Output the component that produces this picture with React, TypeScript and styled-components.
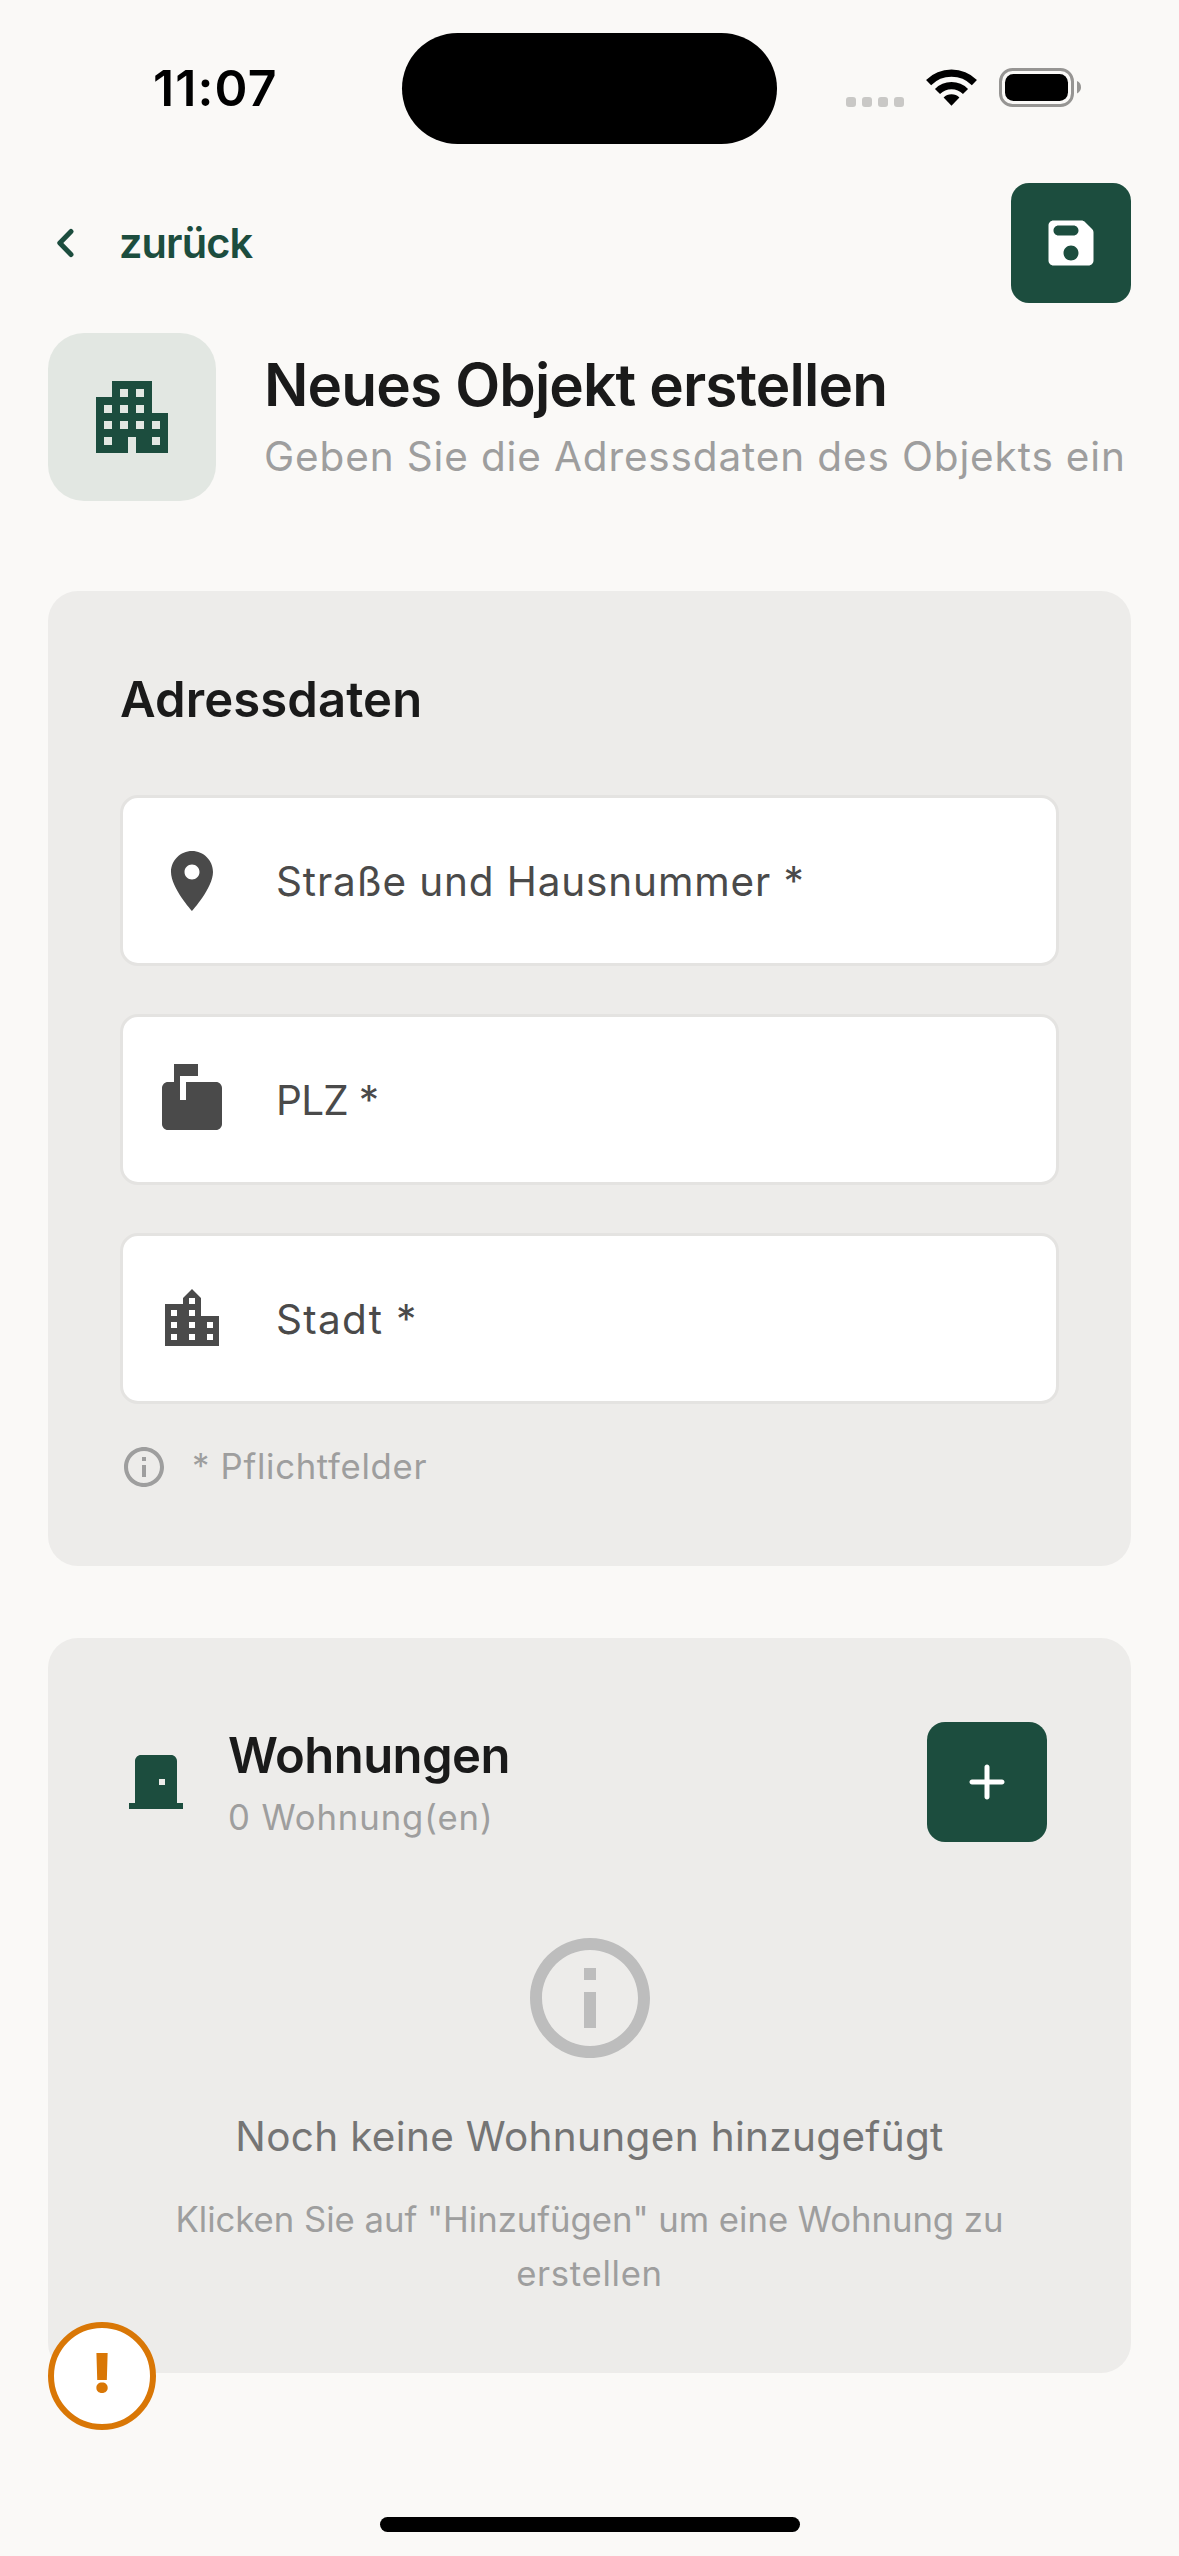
import React from 'react';
import styled, { createGlobalStyle } from 'styled-components';

const color = {
  page: '#faf9f7',
  card: '#edecea',
  green: '#1c4d3e',
  tint: '#e2e7e2',
  ink: '#1a1a1a',
  field: '#4a4a4a',
  fieldBorder: '#e4e3e1',
  muted: '#9e9e9e',
  body: '#757575',
  faint: '#bdbdbd',
  warning: '#d97706',
};

const GlobalStyle = createGlobalStyle`
  * { box-sizing: border-box; }
  body { margin: 0; background: ${color.page}; font-family: Inter, "Liberation Sans", sans-serif; font-weight: 400; }
  h1, h2, p { margin: 0; }
  button { border: 0; padding: 0; font: inherit; }
  svg { display: block; flex: none; }
`;

const Screen = styled.div`
  position: relative;
  width: 1179px;
  height: 2556px;
  background: ${color.page};
  overflow: hidden;
`;

const StatusBar = styled.div`
  display: grid;
  grid-template-columns: 402px 375px 1fr;
  align-items: center;
  height: 177px;
`;

const Clock = styled.div`
  padding: 0 0 2px 153px;
  font-size: 50px;
  font-weight: 600;
  letter-spacing: 1.1px;
  line-height: 60px;
  color: #000;
`;

const Island = styled.div`
  height: 111px;
  border-radius: 56px;
  background: #000;
`;

const StatusIcons = styled.div`
  display: flex;
  align-items: center;
  padding-left: 69px;
`;

const SignalDots = styled.div`
  display: flex;
  gap: 6px;
  margin: 26px 22px 0 0;
`;

const Dot = styled.span`
  width: 10px;
  height: 10px;
  border-radius: 3px;
  background: #c9c8c6;
`;

const WifiSlot = styled.div`
  margin: 0 22px 2px 0;
`;

const BatterySlot = styled.div`
  margin-bottom: 2px;
`;

const Content = styled.main`
  display: flex;
  flex-direction: column;
  padding: 6px 48px 0;
`;

const TopBar = styled.div`
  display: flex;
  justify-content: space-between;
  align-items: center;
  height: 120px;
`;

const BackButton = styled.button`
  display: flex;
  align-items: center;
  gap: 41px;
  padding-left: 6px;
  background: none;
  color: ${color.green};
`;

const BackLabel = styled.span`
  font-size: 41.5px;
  font-weight: 600;
  letter-spacing: -0.9px;
  line-height: 60px;
`;

const SquareButton = styled.button`
  display: flex;
  align-items: center;
  justify-content: center;
  width: 120px;
  height: 120px;
  border-radius: 18px;
  background: ${color.green};
  color: #fff;
`;

const Hero = styled.header`
  display: flex;
  align-items: center;
  gap: 48px;
  margin-top: 30px;
`;

const HeroIcon = styled.div`
  display: flex;
  align-items: center;
  justify-content: center;
  flex: none;
  width: 168px;
  height: 168px;
  border-radius: 36px;
  background: ${color.tint};
  color: ${color.green};
`;

const HeroTitle = styled.h1`
  margin-bottom: 1px;
  font-size: 58.5px;
  font-weight: 600;
  letter-spacing: -0.86px;
  line-height: 78px;
  white-space: nowrap;
  color: ${color.ink};
`;

const HeroText = styled.p`
  font-size: 40.5px;
  letter-spacing: 0.86px;
  line-height: 63px;
  white-space: nowrap;
  color: ${color.muted};
`;

const Card = styled.section<{ $top: number; $height: number }>`
  display: flex;
  flex-direction: column;
  height: ${p => p.$height}px;
  margin-top: ${p => p.$top}px;
  padding: 72px;
  border-radius: 30px;
  background: ${color.card};
`;

const CardTitle = styled.h2<{ $line: number; $spacing: number }>`
  font-size: 49px;
  font-weight: 600;
  letter-spacing: ${p => p.$spacing}px;
  line-height: ${p => p.$line}px;
  color: ${color.ink};
`;

const Fields = styled.div`
  display: flex;
  flex-direction: column;
  gap: 48px;
  margin-top: 58px;
`;

const Field = styled.div`
  display: flex;
  align-items: center;
  gap: 48px;
  height: 171px;
  padding-left: 33px;
  border: 3px solid ${color.fieldBorder};
  border-radius: 18px;
  background: #fff;
  color: ${color.field};
`;

const FieldLabel = styled.span<{ $spacing: number }>`
  padding-top: 2px;
  font-size: 40.5px;
  letter-spacing: ${p => p.$spacing}px;
  line-height: 60px;
`;

const Note = styled.div`
  display: flex;
  align-items: center;
  gap: 24px;
  height: 48px;
  margin-top: 39px;
  color: ${color.muted};
`;

const SmallText = styled.span<{ $spacing: number }>`
  font-size: 34.7px;
  letter-spacing: ${p => p.$spacing}px;
  line-height: 54px;
  white-space: nowrap;
  color: ${color.muted};
`;

const NoteText = styled(SmallText)`
  padding-bottom: 2px;
`;

const UnitsHeader = styled.div`
  display: flex;
  align-items: center;
  height: 144px;
  padding-right: 12px;
  color: ${color.green};
`;

const UnitsHeading = styled.div`
  display: flex;
  flex: 1;
  flex-direction: column;
  padding: 2px 0 0 36px;
`;

const EmptyState = styled.div`
  display: flex;
  flex-direction: column;
  align-items: center;
  padding-top: 72px;
  color: ${color.faint};
`;

const EmptyTitle = styled.p`
  margin: 35px 0 24px;
  font-size: 40.5px;
  letter-spacing: 0.32px;
  line-height: 63px;
  white-space: nowrap;
  color: ${color.body};
`;

const WarningBadge = styled.div`
  position: absolute;
  left: 48px;
  top: 2322px;
  display: flex;
  justify-content: center;
  width: 108px;
  height: 108px;
  border: 6px solid ${color.warning};
  border-radius: 50%;
  background: #fff;
  font-size: 54px;
  font-weight: 900;
  line-height: 89px;
  color: ${color.warning};
`;

const HomeIndicator = styled.div`
  position: absolute;
  left: 380px;
  top: 2517px;
  width: 420px;
  height: 15px;
  border-radius: 8px;
  background: #000;
`;

const paths = {
  apartment:
    'M17 11V3H7v4H3v14h8v-4h2v4h8V11h-4zM7 19H5v-2h2v2zm0-4H5v-2h2v2zm0-4H5V9h2v2zm4 4H9v-2h2v2zm0-4H9V9h2v2zm0-4H9V5h2v2zm4 8h-2v-2h2v2zm0-4h-2V9h2v2zm0-4h-2V5h2v2zm4 12h-2v-2h2v2zm0-4h-2v-2h2v2z',
  save:
    'M17.59 3.59c-.38-.38-.89-.59-1.42-.59H5c-1.11 0-2 .9-2 2v14c0 1.1.9 2 2 2h14c1.1 0 2-.9 2-2V7.83c0-.53-.21-1.04-.59-1.41l-2.82-2.83zM12 19c-1.66 0-3-1.34-3-3s1.34-3 3-3 3 1.34 3 3-1.34 3-3 3zm1-10H7c-1.1 0-2-.9-2-2s.9-2 2-2h6c1.1 0 2 .9 2 2s-.9 2-2 2z',
  pin:
    'M12 2C8.13 2 5 5.13 5 9c0 5.25 7 13 7 13s7-7.75 7-13c0-3.87-3.13-7-7-7zm0 9.5c-1.38 0-2.5-1.12-2.5-2.5s1.12-2.5 2.5-2.5 2.5 1.12 2.5 2.5-1.12 2.5-2.5 2.5z',
  mailbox:
    'M20 6H10v6H8V4h6V0H6v6H4c-1.1 0-2 .9-2 2v12c0 1.1.9 2 2 2h16c1.1 0 2-.9 2-2V8c0-1.1-.9-2-2-2z',
  city:
    'M15 11V5l-3-3-3 3v2H3v14h18V11h-6zm-8 8H5v-2h2v2zm0-4H5v-2h2v2zm0-4H5V9h2v2zm6 8h-2v-2h2v2zm0-4h-2v-2h2v2zm0-4h-2V9h2v2zm0-4h-2V5h2v2zm6 12h-2v-2h2v2zm0-4h-2v-2h2v2z',
  info:
    'M11 7h2v2h-2zm0 4h2v6h-2zm1-9C6.48 2 2 6.48 2 12s4.48 10 10 10 10-4.48 10-10S17.52 2 12 2zm0 18c-4.41 0-8-3.59-8-8s3.59-8 8-8 8 3.59 8 8-3.59 8-8 8z',
  door: 'M19 19V5c0-1.1-.9-2-2-2H7c-1.1 0-2 .9-2 2v14H3v2h18v-2h-2zm-4-6h-2v-2h2v2z',
  plus:
    'M18 13h-5v5c0 .55-.45 1-1 1s-1-.45-1-1v-5H6c-.55 0-1-.45-1-1s.45-1 1-1h5V6c0-.55.45-1 1-1s1 .45 1 1v5h5c.55 0 1 .45 1 1s-.45 1-1 1z',
};

function Icon({ name, size }: { name: keyof typeof paths; size: number }) {
  return (
    <svg width={size} height={size} viewBox="0 0 24 24" fill="currentColor" aria-hidden="true">
      <path d={paths[name]} />
    </svg>
  );
}

const fields: { icon: keyof typeof paths; label: string; spacing: number }[] = [
  { icon: 'pin', label: 'Straße und Hausnummer *', spacing: 0.86 },
  { icon: 'mailbox', label: 'PLZ *', spacing: -0.7 },
  { icon: 'city', label: 'Stadt *', spacing: 1.3 },
];

export default function App() {
  return (
    <Screen>
      <GlobalStyle />
      <StatusBar>
        <Clock>11:07</Clock>
        <Island />
        <StatusIcons>
          <SignalDots>
            <Dot />
            <Dot />
            <Dot />
            <Dot />
          </SignalDots>
          <WifiSlot>
            <svg width="51" height="37" viewBox="0 0 50 37">
              <g fill="none" stroke="#000" strokeWidth="7.2">
                <path d="M2.1 13.6A32.4 32.4 0 0 1 47.9 13.6" />
                <path d="M11 22.5A19.8 19.8 0 0 1 39 22.5" />
              </g>
              <path d="M25 36.8L17.1 28.6A11.2 11.2 0 0 1 32.9 28.6Z" />
            </svg>
          </WifiSlot>
          <BatterySlot>
            <svg width="83" height="39" viewBox="0 0 83 39">
              <rect x="1.5" y="1.5" width="72" height="36" rx="12" fill="none" stroke="#969593" strokeWidth="3" />
              <rect x="6" y="6" width="63" height="27" rx="8.5" />
              <path d="M78 13C80.8 14.2 82 16.6 82 19.2S80.8 24.2 78 25.4Z" fill="#969593" />
            </svg>
          </BatterySlot>
        </StatusIcons>
      </StatusBar>

      <Content>
        <TopBar>
          <BackButton>
            <svg width="24" height="36" viewBox="0 0 24 36">
              <path
                d="M17 6.5L5.8 18L17 29.5"
                fill="none"
                stroke="currentColor"
                strokeWidth="5"
                strokeLinecap="round"
                strokeLinejoin="round"
              />
            </svg>
            <BackLabel>zurück</BackLabel>
          </BackButton>
          <SquareButton aria-label="Speichern">
            <Icon name="save" size={60} />
          </SquareButton>
        </TopBar>

        <Hero>
          <HeroIcon>
            <Icon name="apartment" size={96} />
          </HeroIcon>
          <div>
            <HeroTitle>Neues Objekt erstellen</HeroTitle>
            <HeroText>Geben Sie die Adressdaten des Objekts ein</HeroText>
          </div>
        </Hero>

        <Card $top={90} $height={975}>
          <CardTitle $line={74} $spacing={0.1}>
            Adressdaten
          </CardTitle>
          <Fields>
            {fields.map(f => (
              <Field key={f.label}>
                <Icon name={f.icon} size={72} />
                <FieldLabel $spacing={f.spacing}>{f.label}</FieldLabel>
              </Field>
            ))}
          </Fields>
          <Note>
            <Icon name="info" size={48} />
            <NoteText $spacing={0.7}>* Pflichtfelder</NoteText>
          </Note>
        </Card>

        <Card $top={72} $height={735}>
          <UnitsHeader>
            <Icon name="door" size={72} />
            <UnitsHeading>
              <CardTitle $line={68} $spacing={-0.55}>
                Wohnungen
              </CardTitle>
              <SmallText $spacing={0.9}>0 Wohnung(en)</SmallText>
            </UnitsHeading>
            <SquareButton aria-label="Wohnung anlegen">
              <Icon name="plus" size={60} />
            </SquareButton>
          </UnitsHeader>
          <EmptyState>
            <Icon name="info" size={144} />
            <EmptyTitle>Noch keine Wohnungen hinzugefügt</EmptyTitle>
            <SmallText $spacing={-0.03}>Klicken Sie auf "Hinzufügen" um eine Wohnung zu</SmallText>
            <SmallText $spacing={0.7}>erstellen</SmallText>
          </EmptyState>
        </Card>
      </Content>

      <WarningBadge>!</WarningBadge>
      <HomeIndicator />
    </Screen>
  );
}
